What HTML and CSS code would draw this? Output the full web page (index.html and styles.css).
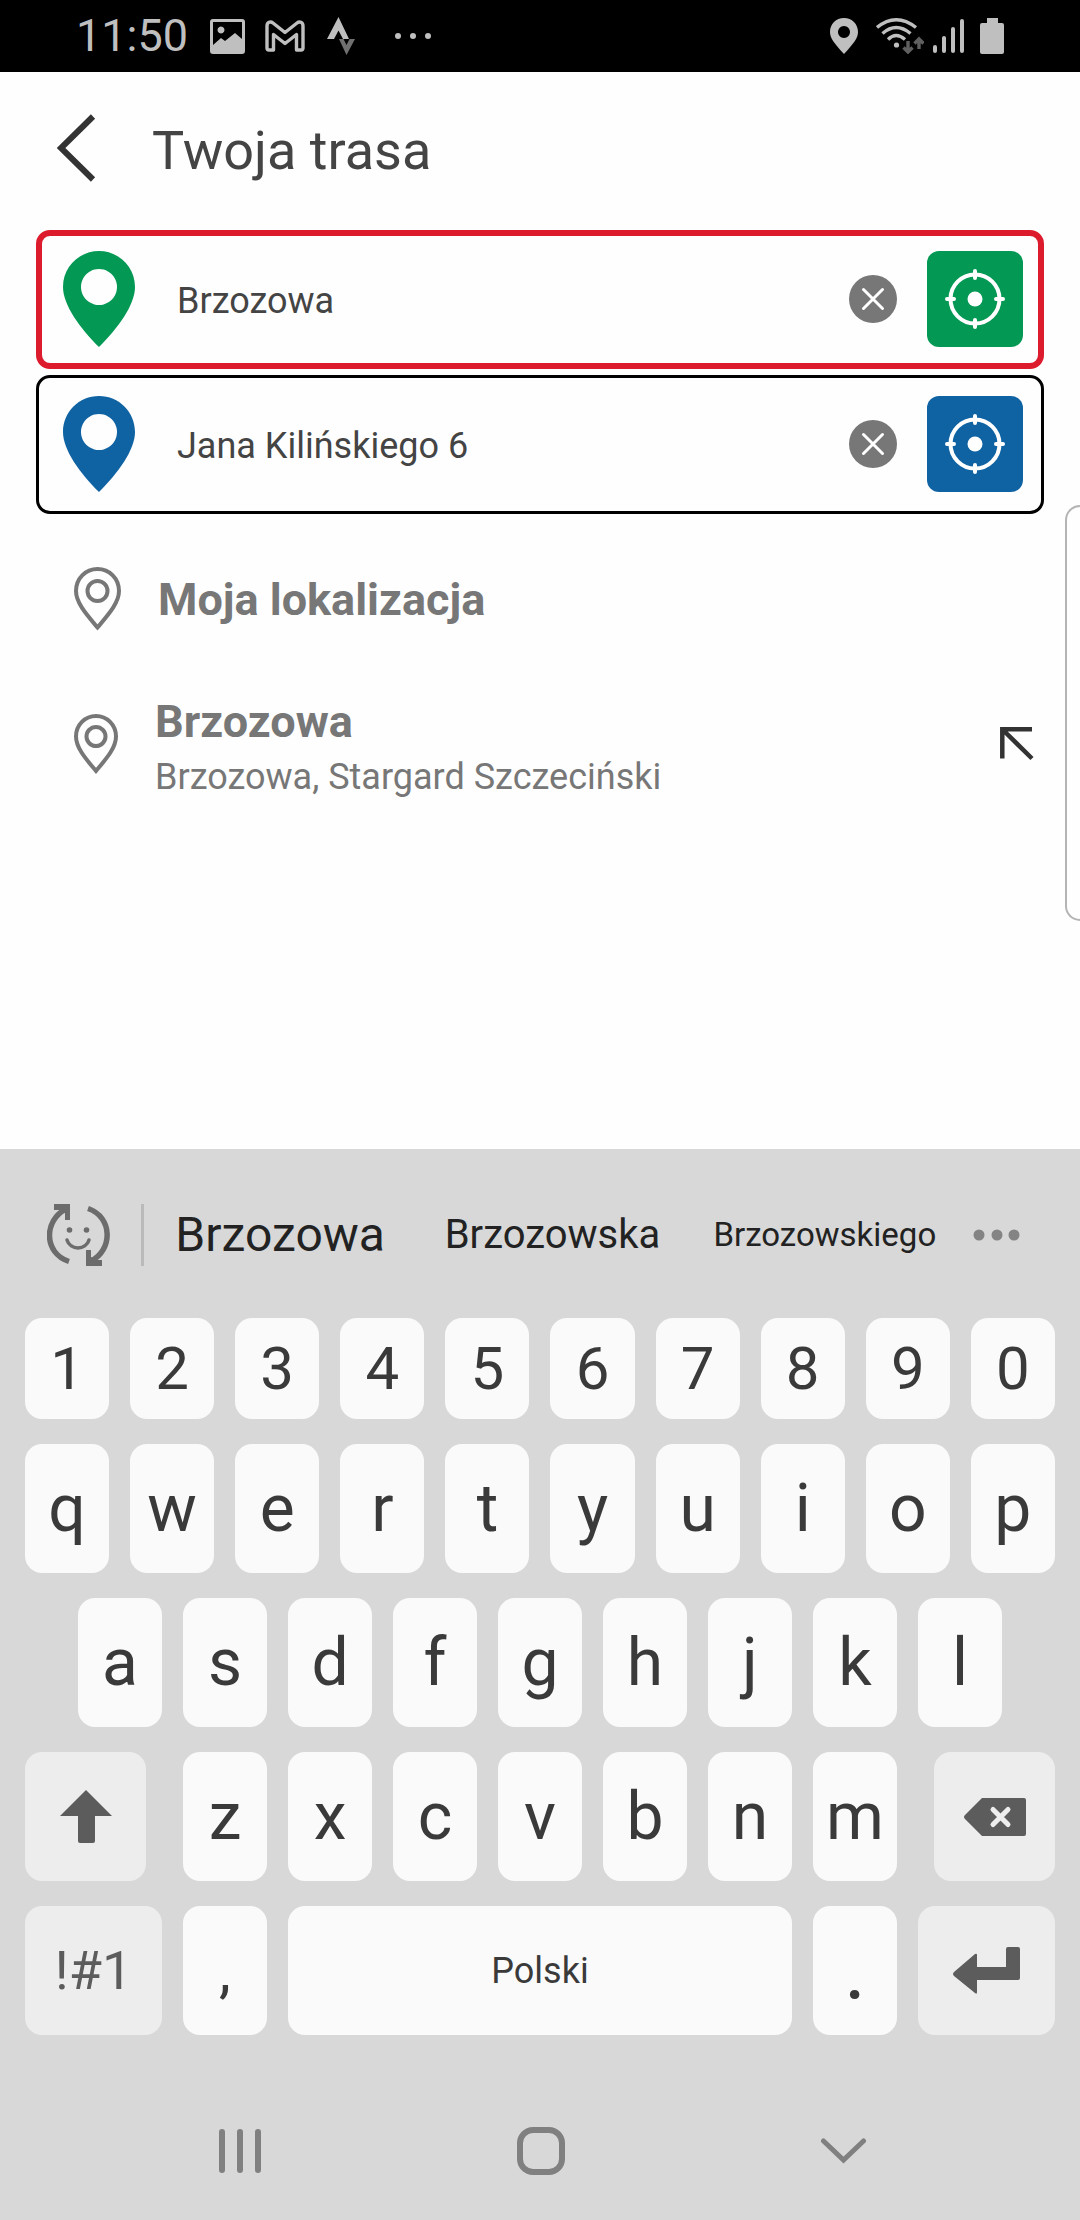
FILE: index.html
```html
<!DOCTYPE html>
<html lang="pl">
<head>
<meta charset="utf-8">
<meta name="viewport" content="width=device-width, initial-scale=1">
<title>Twoja trasa</title>
<link rel="stylesheet" href="styles.css">
</head>
<body>
<div class="status">
  <time class="status-time">11:50</time>
  <svg class="s-image" width="35" height="35" viewBox="0 0 35 35" fill="currentColor"><path fill-rule="evenodd" d="M3 0H32Q35 0 35 3V32Q35 35 32 35H3Q0 35 0 32V3Q0 0 3 0ZM3 3V26L11 19L15 22L25 14L32 20V3ZM11 7.500a3.500 3.500 0 1 1-.01 0Z"/></svg>
  <svg class="s-mail" width="40" height="32" viewBox="0 0 40 32" fill="none" stroke="currentColor" stroke-width="3.400" stroke-linejoin="round"><path d="M2 6V28Q2 30 4 30H8.500V14.500L20 23.500L31.500 14.500V30H36Q38 30 38 28V6C38 2 34.500 1 32 3L20 12.500L8 3C5.500 1 2 2 2 6Z"/></svg>
  <svg class="s-strava" width="28" height="38" viewBox="0 0 28 38"><path fill="#bfbfbf" d="M11.500 0L22 22H16L11.500 13.500L7 22H0Z"/><path fill="#707070" d="M12 22H16.500L19.500 28L22.500 22H28L19.500 38Z"/></svg>
  <svg class="s-more" width="36" height="6" viewBox="0 0 36 6" fill="currentColor"><circle cx="3" cy="3" r="3"/><circle cx="18" cy="3" r="3"/><circle cx="33" cy="3" r="3"/></svg>
  <svg class="s-place" width="28" height="36" viewBox="0 0 28 36" fill="currentColor"><path fill-rule="evenodd" d="M14 0C6 0 0 6 0 14C0 20 4 25 14 36C24 25 28 20 28 14C28 6 22 0 14 0ZM14 8a6 6 0 1 1-.01 0Z"/></svg>
  <svg class="s-wifi" width="48" height="36" viewBox="0 0 48 36" fill="none" stroke="currentColor" stroke-width="3.400"><path d="M1 9.500Q20 -6 40 9.500M6.500 15.500Q20 3.500 34.500 15.500M12 21.500Q20 13.500 29 21.500"/><circle cx="20.500" cy="27" r="2.600" fill="currentColor" stroke="none"/><path stroke="#606060" d="M32 23V34M27.500 29.500L32 34L36.500 29.500M43 31V21M38.500 25.500L43 21L47.500 25.500"/></svg>
  <svg class="s-signal" width="31" height="34" viewBox="0 0 31 34" stroke="currentColor" stroke-width="4" stroke-linecap="round"><path d="M2 28V32M11 19V32M20 10V32M29 2V32"/></svg>
  <svg class="s-battery" width="24" height="36" viewBox="0 0 24 36" fill="currentColor"><path d="M7 0H18V5H22Q24 5 24 7V34Q24 36 22 36H2Q0 36 0 34V7Q0 5 2 5H7Z"/></svg>
</div>

<header class="header">
  <button class="plain" aria-label="Wstecz"><svg width="40" height="74" viewBox="0 0 40 74" fill="none" stroke="#333" stroke-width="6"><path d="M36 2.500L4 34L36 65.500"/></svg></button>
  <h1 class="title">Twoja trasa</h1>
</header>

<main class="main">
  <form class="fields">
    <div class="field field-active">
      <svg class="pin pin-from" width="72" height="96" viewBox="0 0 72 96"><path fill-rule="evenodd" d="M36 0C16 0 0 16 0 36C0 54 17 77 36 96C55 77 72 54 72 36C72 16 56 0 36 0ZM36 18a18 18 0 1 1-.01 0Z"/></svg>
      <input class="field-input" type="text" value="Brzozowa" aria-label="Skąd">
      <button class="plain clear" type="button" aria-label="Wyczyść"><svg width="48" height="48" viewBox="0 0 48 48"><circle cx="24" cy="24" r="24" fill="#777"/><path d="M14.500 14.500L33.500 33.500M33.500 14.500L14.500 33.500" stroke="#fff" stroke-width="3" stroke-linecap="round"/></svg></button>
      <button class="plain locate locate-from" type="button" aria-label="Wskaż na mapie"><svg width="60" height="60" viewBox="0 0 60 60" fill="none" stroke="#fff" stroke-width="4"><circle cx="30" cy="30" r="24.500"/><circle cx="30" cy="30" r="7.500" fill="#fff" stroke="none"/><path stroke-linecap="round" d="M30 2V9M30 51V58M2 30H9M51 30H58"/></svg></button>
    </div>
    <div class="field">
      <svg class="pin pin-to" width="72" height="96" viewBox="0 0 72 96"><path fill-rule="evenodd" d="M36 0C16 0 0 16 0 36C0 54 17 77 36 96C55 77 72 54 72 36C72 16 56 0 36 0ZM36 18a18 18 0 1 1-.01 0Z"/></svg>
      <input class="field-input" type="text" value="Jana Kilińskiego 6" aria-label="Dokąd">
      <button class="plain clear" type="button" aria-label="Wyczyść"><svg width="48" height="48" viewBox="0 0 48 48"><circle cx="24" cy="24" r="24" fill="#777"/><path d="M14.500 14.500L33.500 33.500M33.500 14.500L14.500 33.500" stroke="#fff" stroke-width="3" stroke-linecap="round"/></svg></button>
      <button class="plain locate locate-to" type="button" aria-label="Wskaż na mapie"><svg width="60" height="60" viewBox="0 0 60 60" fill="none" stroke="#fff" stroke-width="4"><circle cx="30" cy="30" r="24.500"/><circle cx="30" cy="30" r="7.500" fill="#fff" stroke="none"/><path stroke-linecap="round" d="M30 2V9M30 51V58M2 30H9M51 30H58"/></svg></button>
    </div>
  </form>
  <div class="places">
    <button class="plain place">
      <svg width="47" height="66" viewBox="0 0 47 66" fill="none" stroke="#777" stroke-width="4"><path d="M23.500 2C11.500 2 2 11.500 2 24C2 36 13 48 23.500 60.500C34 48 45 36 45 24C45 11.500 35.500 2 23.500 2Z"/><circle cx="23.500" cy="24" r="10"/></svg>
      <span class="place-text"><span class="place-name">Moja lokalizacja</span></span>
    </button>
    <button class="plain place">
      <svg width="44" height="68" viewBox="0 0 44 68" fill="none" stroke="#777" stroke-width="4"><path d="M22 2C11 2 2 11 2 22.500C2 34 12 45 22 57C32 45 42 34 42 22.500C42 11 33 2 22 2Z"/><circle cx="22" cy="22.500" r="9.500"/></svg>
      <span class="place-text"><span class="place-name">Brzozowa</span><span class="place-detail">Brzozowa, Stargard Szczeciński</span></span>
      <svg width="34" height="42" viewBox="0 0 34 42" fill="none" stroke="#333" stroke-width="4.500"><path d="M32 2.300H2.300V31.500M3 3L32 31.500"/></svg>
    </button>
  </div>
</main>
<div class="edge-panel"></div>

<section class="keyboard" aria-label="Klawiatura">
  <div class="suggest">
    <button class="plain emoji" aria-label="Emotikony"><svg width="63" height="62" viewBox="0 0 63 62" fill="none" stroke="#6c6c6c"><path stroke-width="5.500" d="M19 5C-3 16 -4 49 22 57.500M41 4.500C66 13 66 46 44 57"/><path fill="#6c6c6c" stroke="none" d="M7 0H23V16H18V9L13 6H7ZM39 46H44V53L49 56H55V62H39Z"/><g fill="#6c6c6c" stroke="none"><circle cx="22.500" cy="26" r="2.800"/><circle cx="39.500" cy="26" r="2.800"/></g><path stroke-width="3.500" stroke-linecap="round" d="M20 36C23 46.500 39 46.500 42 36"/></svg></button>
    <div class="words">
      <button class="plain word word-l">Brzozowa</button>
      <button class="plain word word-m">Brzozowska</button>
      <button class="plain word word-s">Brzozowskiego</button>
    </div>
    <button class="plain more" aria-label="Więcej"><svg width="48" height="12" viewBox="0 0 48 12" fill="#848484"><circle cx="6" cy="6" r="5.500"/><circle cx="24" cy="6" r="5.500"/><circle cx="41" cy="6" r="5.500"/></svg></button>
  </div>
  <div class="rows">
    <div class="row row-digits"><button class="key">1</button><button class="key">2</button><button class="key">3</button><button class="key">4</button><button class="key">5</button><button class="key">6</button><button class="key">7</button><button class="key">8</button><button class="key">9</button><button class="key">0</button></div>
    <div class="row"><button class="key">q</button><button class="key">w</button><button class="key">e</button><button class="key">r</button><button class="key">t</button><button class="key">y</button><button class="key">u</button><button class="key">i</button><button class="key">o</button><button class="key">p</button></div>
    <div class="row row-home"><button class="key">a</button><button class="key">s</button><button class="key">d</button><button class="key">f</button><button class="key">g</button><button class="key">h</button><button class="key">j</button><button class="key">k</button><button class="key">l</button></div>
    <div class="row">
      <button class="key key-fn key-shift" aria-label="Shift"><svg width="52" height="54" viewBox="0 0 52 54" fill="currentColor"><path d="M26 0L52 26H35V51Q35 53 33 53H20Q18 53 18 51V26H0Z"/></svg></button>
      <button class="key">z</button><button class="key">x</button><button class="key">c</button><button class="key">v</button><button class="key">b</button><button class="key">n</button><button class="key">m</button>
      <button class="key key-fn key-back" aria-label="Usuń"><svg width="62" height="38" viewBox="0 0 62 38" fill="currentColor"><path d="M18 0H60Q62 0 62 2V36Q62 38 60 38H18L1 21Q-1 19 1 17Z"/><path d="M29 11.500L44 26.500M44 11.500L29 26.500" stroke="#ededed" stroke-width="5" stroke-linecap="round"/></svg></button>
    </div>
    <div class="row">
      <button class="key key-fn key-wide key-sym">!#1</button>
      <button class="key key-comma">,</button>
      <button class="key key-space">Polski</button>
      <button class="key key-dot">.</button>
      <button class="key key-fn key-wide" aria-label="Enter"><svg width="67" height="48" viewBox="0 0 67 48" fill="currentColor"><path d="M55 0H65Q67 0 67 2V31Q67 33 65 33H24V45Q24 48 22 46L1 29Q-1 27 1 25L22 7Q24 6 24 8V20H53V2Q53 0 55 0Z"/></svg></button>
    </div>
  </div>
  <nav class="nav" aria-label="System">
    <button class="plain" aria-label="Ostatnie"><svg width="42" height="44" viewBox="0 0 42 44" stroke="#808080" stroke-width="6" stroke-linecap="round"><path d="M3 3V41M21 3V41M39 3V41"/></svg></button>
    <button class="plain" aria-label="Ekran główny"><svg width="48" height="48" viewBox="0 0 48 48" fill="none" stroke="#808080" stroke-width="6"><rect x="3" y="3" width="42" height="42" rx="13"/></svg></button>
    <button class="plain" aria-label="Ukryj klawiaturę"><svg width="45" height="26" viewBox="0 0 45 26" fill="none" stroke="#808080" stroke-width="5" stroke-linecap="round"><path d="M2.500 3L22.500 22L42.500 3"/></svg></button>
  </nav>
</section>
</body>
</html>
```

FILE: styles.css
```css
* {
  box-sizing: border-box;
}

body {
  margin: 0;
  min-height: 100vh;
  display: flex;
  flex-direction: column;
  position: relative;
  overflow-x: hidden;
  background: #fefefe;
  font-family: Roboto, "Noto Sans", sans-serif;
}

svg {
  display: block;
  flex: none;
}

button,
input {
  font-family: inherit;
}

.plain {
  border: 0;
  padding: 0;
  background: none;
  color: inherit;
}

/* Status bar */
.status {
  display: flex;
  align-items: center;
  height: 72px;
  padding: 0 76px;
  background: #000;
  color: #bfbfbf;
}

.status-time {
  font-size: 45px;
  line-height: 72px;
}

.s-image {
  margin-left: 22px;
}

.s-mail {
  margin-left: 20px;
}

.s-strava {
  margin-left: 22px;
}

.s-more {
  margin-left: 40px;
}

.s-place {
  margin-left: auto;
}

.s-wifi {
  margin-left: 18px;
}

.s-signal {
  margin-left: 9px;
}

.s-battery {
  margin-left: 16px;
}

/* Header */
.header {
  display: flex;
  align-items: center;
  gap: 55px;
  padding: 42px 57px;
  color: #444;
}

.title {
  margin: 0;
  font-size: 54px;
  font-weight: 400;
  line-height: 64px;
}

/* Route fields */
.main {
  flex: 1;
}

.fields {
  display: flex;
  flex-direction: column;
  gap: 6px;
  padding: 0 36px;
}

.field {
  display: flex;
  align-items: center;
  padding: 17px 18px 19px 24px;
  border: 3px solid #000;
  border-radius: 14px;
  height: 139px;
}

.field-active {
  padding: 14px 15px 16px 21px;
  border: 6px solid #dc1b2c;
}

.pin-from {
  fill: #039954;
}

.pin-to {
  fill: #1063a3;
}

.field-input {
  flex: 1;
  min-width: 0;
  height: 60px;
  margin-left: 42px;
  padding: 5px 0 0;
  border: 0;
  outline: 0;
  background: none;
  color: #444;
  font-size: 36px;
}

.clear {
  margin-right: 30px;
}

.locate {
  display: flex;
  align-items: center;
  justify-content: center;
  width: 96px;
  height: 96px;
  border-radius: 12px;
}

.locate-from {
  background: #039954;
}

.locate-to {
  background: #1063a3;
}

/* Place list */
.places {
  display: flex;
  flex-direction: column;
  gap: 63px;
  padding: 53px 46px 0 74px;
}

.place {
  display: flex;
  align-items: center;
  gap: 37px;
  color: #777;
  text-align: left;
}

.place-text {
  display: flex;
  flex: 1;
  flex-direction: column;
  gap: 6px;
}

.place-name {
  font-size: 45px;
  font-weight: 700;
  line-height: 52px;
}

.place-detail {
  font-size: 36px;
  line-height: 46px;
}

/* Handle of the side panel, lying over the page edge */
.edge-panel {
  position: absolute;
  top: 505px;
  right: 0;
  width: 15px;
  height: 416px;
  border: 2px solid #b4b4b4;
  border-right: 0;
  border-radius: 20px 0 0 20px;
}

/* Keyboard */
.keyboard {
  padding-top: 55px;
  background: #d8d8d8;
  color: #3a3a3a;
}

.suggest {
  display: flex;
  align-items: center;
  padding-left: 47px;
  padding-right: 59px;
}

.emoji {
  padding-right: 31px;
  border-right: 3px solid #bababa;
}

.words {
  flex: 1;
  display: grid;
  grid-template-columns: repeat(3, minmax(0, 1fr));
  align-items: center;
}

.word {
  color: #222;
  line-height: 62px;
}

.word-l {
  font-size: 48px;
}

.word-m {
  font-size: 40px;
}

.word-s {
  font-size: 33px;
}

.more {
  padding-left: 12px;
}

.rows {
  display: flex;
  flex-direction: column;
  gap: 25px;
  padding: 52px 25px 47px;
}

.row {
  display: flex;
  gap: 21px;
  height: 129px;
  font-size: 66px;
}

.row-digits {
  height: 101px;
  font-size: 60px;
}

.row-home {
  padding: 0 53px;
}

.key {
  display: flex;
  align-items: center;
  justify-content: center;
  flex: 84 1 0;
  min-width: 0;
  padding: 0;
  border: 0;
  border-radius: 17px;
  background: #fafafa;
  color: #3a3a3a;
  font-size: inherit;
}

.key-fn {
  background: #ededed;
  color: #5c5c5c;
}

.key-shift {
  flex-grow: 121;
  margin-right: 16px;
}

.key-back {
  flex-grow: 121;
  margin-left: 16px;
}

.key-wide {
  flex-grow: 137;
}

.key-sym {
  font-size: 54px;
}

.key-comma {
  font-size: 60px;
}

.key-space {
  flex-grow: 504;
  font-size: 36px;
}

.key-dot {
  font-size: 84px;
}

.nav {
  display: grid;
  grid-template-columns: repeat(3, 1fr);
  height: 138px;
  padding: 0 86px 0 89px;
}

.nav .plain {
  display: flex;
  align-items: center;
  justify-content: center;
}
```
